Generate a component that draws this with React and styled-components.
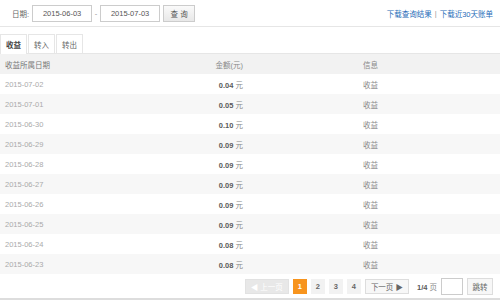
import React from 'react'
import styled, { createGlobalStyle } from 'styled-components'

const GlobalStyle = createGlobalStyle`
    body {
        margin: 0;
        background: #fff;
        font-family: "Liberation Sans", "Noto Sans CJK SC", sans-serif;
        font-size: 7.5px;
        color: #666;
    }
`

const rows = [
    ['2015-07-02', '0.04'],
    ['2015-07-01', '0.05'],
    ['2015-06-30', '0.10'],
    ['2015-06-29', '0.09'],
    ['2015-06-28', '0.09'],
    ['2015-06-27', '0.09'],
    ['2015-06-26', '0.09'],
    ['2015-06-25', '0.09'],
    ['2015-06-24', '0.08'],
    ['2015-06-23', '0.08'],
]

function App() {
    return (
        <Page>
            <GlobalStyle />
            <FilterBar>
                <Label>日期:</Label>
                <DateInput>2015-06-03</DateInput>
                <Dash>-</Dash>
                <DateInput>2015-07-03</DateInput>
                <QueryButton>查 询</QueryButton>
                <Links>
                    <Link>下载查询结果</Link>
                    <Sep>|</Sep>
                    <Link>下载近30天账单</Link>
                </Links>
            </FilterBar>
            <Tabs>
                <Tab active>收益</Tab>
                <Tab>转入</Tab>
                <Tab>转出</Tab>
            </Tabs>
            <Table>
                <HeadRow>
                    <DateCell>收益所属日期</DateCell>
                    <AmountCell>金额(元)</AmountCell>
                    <InfoCell>信息</InfoCell>
                </HeadRow>
                {rows.map(([date, amount], i) => (
                    <Row key={date} $striped={i % 2 === 1}>
                        <DateCell $muted>{date}</DateCell>
                        <AmountCell><Amount>{amount}</Amount> 元</AmountCell>
                        <InfoCell>收益</InfoCell>
                    </Row>
                ))}
            </Table>
            <Pager>
                <PageBtn $disabled>◀ 上一页</PageBtn>
                <PageNum $current>1</PageNum>
                <PageNum>2</PageNum>
                <PageNum>3</PageNum>
                <PageNum>4</PageNum>
                <PageBtn>下一页 ▶</PageBtn>
                <PageInfo><Amount>1/4</Amount> 页</PageInfo>
                <JumpInput />
                <JumpBtn>跳转</JumpBtn>
            </Pager>
        </Page>
    )
}

const Page = styled.div`
    width: 500px;
    height: 300px;
    overflow: hidden;
    border-bottom: 2px solid #ddd;
    box-sizing: border-box;
`

const FilterBar = styled.div`
    height: 26px;
    display: flex;
    align-items: center;
    padding: 0 7px 0 12px;
    border-bottom: 1px solid #e6e6e6;
`

const Label = styled.span`
    color: #666;
    margin-right: 3px;
`

const DateInput = styled.div`
    width: 58px;
    height: 15px;
    border: 1px solid #ccc;
    display: flex;
    align-items: center;
    justify-content: center;
    color: #555;
`

const Dash = styled.span`
    width: 8px;
    text-align: center;
    color: #999;
`

const QueryButton = styled.div`
    margin-left: 3px;
    width: 30px;
    height: 15px;
    border: 1px solid #ccc;
    background: linear-gradient(#fafafa, #e8e8e8);
    display: flex;
    align-items: center;
    justify-content: center;
    color: #555;
`

const Links = styled.div`
    margin-left: auto;
    display: flex;
    align-items: center;
    gap: 3px;
`

const Link = styled.span`
    color: #1e6bb8;
`

const Sep = styled.span`
    color: #999;
`

const Tabs = styled.div`
    margin-top: 7px;
    display: flex;
    border-bottom: 1px solid #e6e6e6;
    height: 19px;
`

const Tab = styled.div`
    width: 27px;
    height: ${p => (p.active ? '20px' : '19px')};
    margin-right: 1px;
    box-sizing: border-box;
    border: 1px solid #e6e6e6;
    border-bottom: none;
    background: #fff;
    display: flex;
    align-items: center;
    justify-content: center;
    font-weight: ${p => (p.active ? 'bold' : 'normal')};
    color: ${p => (p.active ? '#444' : '#666')};
`

const Table = styled.div`
    display: flex;
    flex-direction: column;
`

const Row = styled.div`
    height: 20px;
    display: grid;
    grid-template-columns: 150px 93px 255px;
    align-items: center;
    background: ${p => (p.$striped ? '#f7f7f7' : '#fff')};
`

const HeadRow = styled(Row)`
    background: #f2f2f2;
    color: #777;
`

const DateCell = styled.div`
    padding-left: 5px;
    color: ${p => (p.$muted ? '#aaa' : 'inherit')};
`

const AmountCell = styled.div`
    text-align: right;
    color: #888;
`

const Amount = styled.span`
    font-weight: bold;
    color: #5a5a5a;
`

const InfoCell = styled.div`
    text-align: center;
    color: #888;
`

const Pager = styled.div`
    height: 24px;
    display: flex;
    align-items: center;
    justify-content: flex-end;
    padding-right: 7px;
    gap: 4px;
`

const PageBtn = styled.div`
    height: 15px;
    padding: 0 5px;
    box-sizing: border-box;
    display: flex;
    align-items: center;
    border: 1px solid ${p => (p.$disabled ? '#e2e2e2' : '#ddd')};
    background: ${p => (p.$disabled ? '#e8e8e8' : '#f7f7f7')};
    color: ${p => (p.$disabled ? '#fff' : '#666')};
    white-space: nowrap;
`

const PageNum = styled.div`
    width: 14px;
    height: 15px;
    display: flex;
    align-items: center;
    justify-content: center;
    background: ${p => (p.$current ? '#f7941d' : '#f2f2f2')};
    color: ${p => (p.$current ? '#fff' : '#666')};
    font-weight: bold;
`

const PageInfo = styled.span`
    margin-left: 4px;
    color: #888;
`

const JumpInput = styled.div`
    width: 20px;
    height: 15px;
    border: 1px solid #ccc;
`

const JumpBtn = styled.div`
    width: 24px;
    height: 15px;
    border: 1px solid #ddd;
    background: #f7f7f7;
    display: flex;
    align-items: center;
    justify-content: center;
    color: #666;
`

export default App
